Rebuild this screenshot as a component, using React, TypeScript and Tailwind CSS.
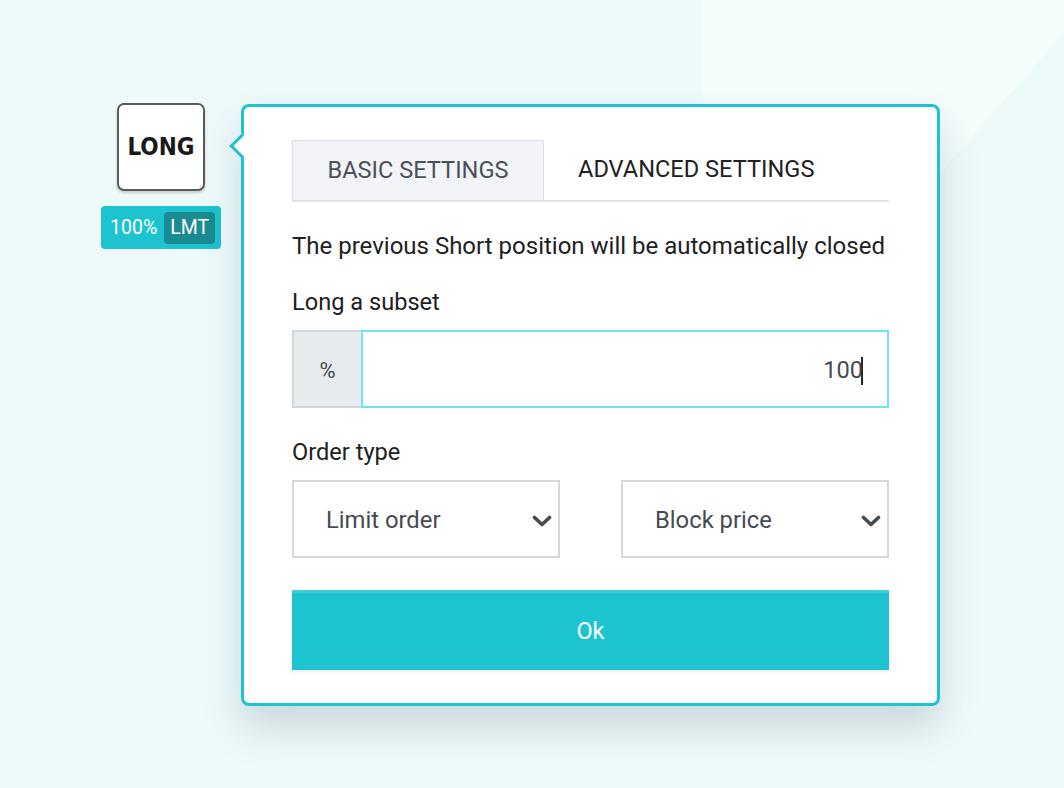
import React from "react";

function Chevron() {
  return (
    <svg width="20" height="12" viewBox="0 0 20 12" className="shrink-0">
      <polyline points="2.5,2.5 10,9.5 17.5,2.5" fill="none" stroke="#454b53" strokeWidth="3.6" strokeLinecap="round" strokeLinejoin="round" />
    </svg>
  );
}

export default function App() {
  return (
    <div className="relative w-[1064px] h-[788px] overflow-hidden bg-[#eef9fa]" style={{ fontFamily: "Roboto, 'Liberation Sans', sans-serif" }}>
      <svg className="absolute inset-0" width="1064" height="788" viewBox="0 0 1064 788">
        <polygon points="702,0 1064,0 1064,33 702,442" fill="#f4fcfc" />
      </svg>
      <div className="relative flex items-start pl-[101px] pt-[103px] gap-[20px]">
        <div className="flex flex-col items-center w-[120px] gap-[15px]">
          <div className="w-[88px] h-[88px] rounded-[7px] border-2 border-[#5b5b5b] bg-white flex items-center justify-center shadow-[0_2px_3px_rgba(0,0,0,0.18)]">
            <span className="text-[24px] font-black text-[#1a1a1a] leading-none" style={{ fontFamily: "'DejaVu Sans Condensed', 'DejaVu Sans', sans-serif" }}>LONG</span>
          </div>
          <div className="w-[120px] h-[43px] rounded-[4px] bg-[#1dc3cf] flex items-center pl-[9px] gap-[7px]">
            <span className="text-white text-[19.5px] leading-none">100%</span>
            <span className="h-[32px] px-[6px] rounded-[4px] bg-[#1a8b91] text-white text-[19.5px] flex items-center leading-none">LMT</span>
          </div>
        </div>
        <div className="relative mt-px w-[699px] h-[602px] rounded-[8px] border-[3px] border-[#1dc3cf] bg-white shadow-[0_22px_40px_rgba(40,70,75,0.18)] px-[48px] pt-[33px]">
          <div className="absolute left-[-11px] top-[30px] w-[18px] h-[18px] rotate-45 bg-white border-l-[3px] border-b-[3px] border-[#1dc3cf]" />
          <div className="flex border-b-2 border-[#e0e2e6]">
            <div className="w-[252px] h-[60px] bg-[#f2f4f7] border border-b-0 border-[#dcdfe4] flex items-center justify-center text-[23.6px] text-[#4a5059]">BASIC SETTINGS</div>
            <div className="h-[60px] pl-[34px] flex items-center text-[23.6px] text-[#212121]">ADVANCED SETTINGS</div>
          </div>
          <div className="mt-[30px] text-[24px] leading-[28px] text-[#212121] whitespace-nowrap">The previous Short position will be automatically closed</div>
          <div className="mt-[28px] text-[23.6px] leading-[28px] text-[#212121]">Long a subset</div>
          <div className="mt-[14px] flex h-[78px]">
            <div className="w-[69px] bg-[#e8ebee] border-2 border-r-0 border-[#d3d7dc] flex items-center justify-center pt-[3px] text-[22px] text-[#454b53]">%</div>
            <div className="flex-1 border-2 border-[#72e5ec] flex items-center justify-end pt-[4px] pr-[24px] text-[23.6px] text-[#454b53]">
              <span>100</span>
              <span className="w-[2px] h-[28px] bg-[#2a2a2a] -ml-[2px]" />
            </div>
          </div>
          <div className="mt-[30px] text-[23.6px] leading-[28px] text-[#212121]">Order type</div>
          <div className="mt-[14px] flex justify-between">
            <div className="w-[268px] h-[78px] border-2 border-[#d4d8dd] flex items-center justify-between pl-[32px] pr-[6px] pt-[3px] text-[23.8px] text-[#454b53]">
              <span>Limit order</span>
              <Chevron />
            </div>
            <div className="w-[268px] h-[78px] border-2 border-[#d4d8dd] flex items-center justify-between pl-[32px] pr-[6px] pt-[3px] text-[23.8px] text-[#454b53]">
              <span>Block price</span>
              <Chevron />
            </div>
          </div>
          <div className="mt-[32px] h-[80px] bg-[#1dc4cf] border-t-[3px] border-[#3fcdd7] flex items-center justify-center text-white text-[23.5px] shadow-[0_2px_3px_rgba(0,0,0,0.08)]">Ok</div>
        </div>
      </div>
    </div>
  );
}
